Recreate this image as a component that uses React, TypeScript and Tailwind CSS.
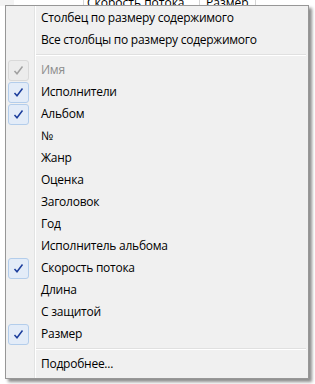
import React from "react";

type Item = { label: string; checked?: boolean; disabled?: boolean } | "sep";

const items: Item[] = [
  { label: "Столбец по размеру содержимого" },
  { label: "Все столбцы по размеру содержимого" },
  "sep",
  { label: "Имя", checked: true, disabled: true },
  { label: "Исполнители", checked: true },
  { label: "Альбом", checked: true },
  { label: "№" },
  { label: "Жанр" },
  { label: "Оценка" },
  { label: "Заголовок" },
  { label: "Год" },
  { label: "Исполнитель альбома" },
  { label: "Скорость потока", checked: true },
  { label: "Длина" },
  { label: "С защитой" },
  { label: "Размер", checked: true },
  "sep",
  { label: "Подробнее..." },
];

function Check({ disabled }: { disabled?: boolean }) {
  return (
    <div className="w-[28px] h-[22px] flex items-center pl-[1px] shrink-0">
      <div
        className={
          "w-[21px] h-[21px] rounded-[3px] border flex items-center justify-center " +
          (disabled ? "border-[#d9d9d9] bg-[#ececec]" : "border-[#b3cdeb] bg-[#e3ecf8]")
        }
      >
        <svg width="11" height="11" viewBox="0 0 11 11">
          <path
            d="M1.5 6 L4 8.8 L9.5 1.5"
            fill="none"
            stroke={disabled ? "#a0a0a0" : "#1b3d9c"}
            strokeWidth="1.5"
          />
        </svg>
      </div>
    </div>
  );
}

export default function App() {
  return (
    <div
      className="relative w-[315px] h-[384px] bg-white overflow-hidden"
      style={{ fontFamily: '"Open Sans", "Noto Sans", sans-serif' }}
    >
      {/* background list header, mostly hidden under the menu */}
      <div className="flex h-[6px] overflow-hidden items-end text-[12px] leading-[14px] text-black">
        <div className="w-[14px] h-full bg-[#f3f3f3]" />
        <div className="w-[70px] h-full border-r border-[#d5d5d5]" />
        <div className="w-[116px] h-full border-r border-[#d5d5d5] pl-[3px] flex items-end">
          <span className="whitespace-nowrap translate-y-[4px]">Скорость потока</span>
        </div>
        <div className="w-[56px] h-full border-r border-[#d5d5d5] pl-[6px] flex items-end">
          <span className="whitespace-nowrap translate-y-[4px]">Размер</span>
        </div>
        <div className="flex-1 h-full" />
      </div>

      {/* context menu */}
      <div className="absolute left-[5px] top-[5px] w-[304px] h-[374px] border border-[#979797] bg-[#f0f0f0] shadow-[3px_3px_3px_rgba(0,0,0,0.45)] py-[1px] pl-[1px] pr-[2px]">
        <div className="absolute left-[28px] top-0 bottom-0 w-px bg-[#e2e3e3]" />
        <div className="absolute left-[29px] top-0 bottom-0 w-px bg-white" />
        <div className="relative flex flex-col">
          {items.map((it, i) =>
            it === "sep" ? (
              <div key={i} className="h-[8px] flex flex-col justify-center pl-[29px]">
                <div className="h-px bg-[#e0e0e0]" />
                <div className="h-px bg-white" />
              </div>
            ) : (
              <div key={i} className="h-[22px] flex items-center">
                {it.checked ? <Check disabled={it.disabled} /> : <div className="w-[28px] shrink-0" />}
                <span
                  className={
                    "pl-[6px] text-[12px] tracking-[-0.25px] leading-[22px] whitespace-nowrap " +
                    (it.disabled ? "text-[#8d8d8d]" : "text-black")
                  }
                >
                  {it.label}
                </span>
              </div>
            )
          )}
        </div>
      </div>
    </div>
  );
}
